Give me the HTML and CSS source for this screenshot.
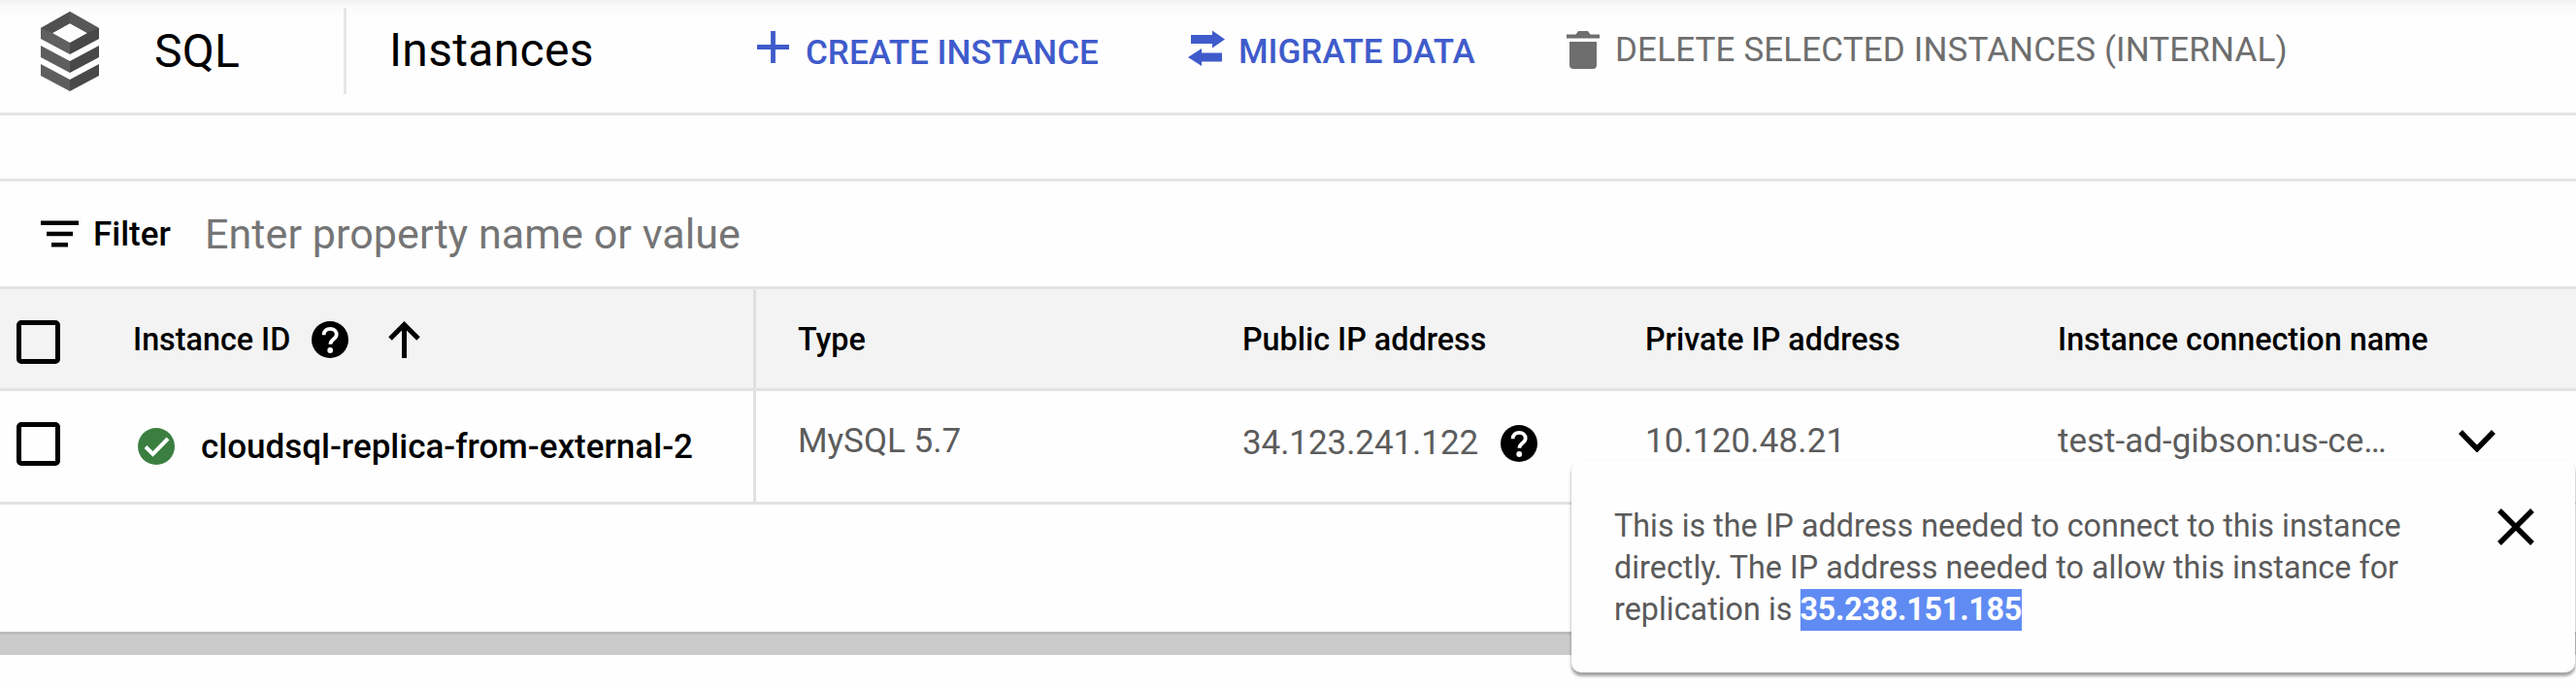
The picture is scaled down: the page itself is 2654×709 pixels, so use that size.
FILE: index.html
```
<!DOCTYPE html>
<html lang="en">
<head>
<meta charset="utf-8">
<title>SQL Instances</title>
<link rel="stylesheet" href="styles.css">
</head>
<body>
<svg class="defs" aria-hidden="true">
  <symbol id="help" viewBox="0 0 38 38">
    <circle cx="19" cy="19" r="19" fill="#000"/>
    <path d="M12.600 14.200c0-4 2.900-6.400 6.600-6.400s6.500 2.400 6.500 6c0 4.600-6.300 5-6.300 10" fill="none" stroke="#fff" stroke-width="3.800"/>
    <circle cx="19.200" cy="30" r="2.900" fill="#fff"/>
  </symbol>
</svg>

<header class="topbar">
  <div class="brand">
    <svg class="logo" viewBox="0 0 60 82">
      <path d="M0 17 30 0v12L12 22 30 32v12L0 28z" fill="#606060"/>
      <path d="M60 17 30 0v12l18 10-18 10v12l30-16z" fill="#484848"/>
      <path d="M0 17 30 0v12L12 22z" fill="#505050"/>
      <path d="M60 17 30 0v12l18 10z" fill="#585858"/>
      <path d="M0 35l30 16v12L0 47zM0 54l30 16v12L0 66z" fill="#5e5e5e"/>
      <path d="M60 35 30 51v12l30-16zM60 54 30 70v12l30-16z" fill="#484848"/>
    </svg>
    <span class="product">SQL</span>
  </div>
  <h1 class="title">Instances</h1>
  <nav class="actions">
    <a class="action create">
      <svg class="plus" viewBox="0 0 33 33"><path d="M16.500 0v33M0 16.500h33" stroke="currentColor" stroke-width="4.800"/></svg>
      <span>CREATE INSTANCE</span>
    </a>
    <a class="action migrate">
      <svg class="swap" viewBox="0 0 38 37"><path d="M3 5h22V.5L38 9.500 25 18.500V14H3zM35 23.500H14V19L0 28l14 9v-4.500h21z" fill="currentColor"/></svg>
      <span>MIGRATE DATA</span>
    </a>
    <a class="action delete">
      <svg class="trash" viewBox="0 0 34 39"><path d="M0 3.500h9.500L12 0h10l2.500 3.500H34v4H0zM3 11h28v24q0 4-4 4H7q-4 0-4-4z" fill="currentColor"/></svg>
      <span>DELETE SELECTED INSTANCES (INTERNAL)</span>
    </a>
  </nav>
</header>

<main class="content">
  <div class="filter">
    <svg class="filter-icon" viewBox="0 0 39 28"><path d="M0 2.800h39M6 14h27M11 25.200h17" stroke="#000" stroke-width="4.600"/></svg>
    <span class="filter-label">Filter</span>
    <span class="filter-hint">Enter property name or value</span>
  </div>

  <div class="row head">
    <div class="cell id">
      <span class="checkbox"></span>
      <span class="label">Instance ID</span>
      <svg class="help"><use href="#help"/></svg>
      <svg class="sort" viewBox="0 0 33 38"><path d="M16.500 38V4M2 18 16.500 3.500 31 18" fill="none" stroke="#000" stroke-width="5"/></svg>
    </div>
    <div class="cell">Type</div>
    <div class="cell">Public IP address</div>
    <div class="cell">Private IP address</div>
    <div class="cell">Instance connection name</div>
  </div>

  <div class="row item">
    <div class="cell id">
      <span class="checkbox"></span>
      <svg class="status" viewBox="0 0 38 38"><circle cx="19" cy="19" r="19" fill="#3b7f40"/><path d="M8 19.500l7.500 7.500L31 11" fill="none" stroke="#fff" stroke-width="4"/></svg>
      <span class="name">cloudsql-replica-from-external-2</span>
    </div>
    <div class="cell">MySQL 5.7</div>
    <div class="cell public"><span>34.123.241.122</span><svg class="help"><use href="#help"/></svg></div>
    <div class="cell private">10.120.48.21</div>
    <div class="cell connection"><span>test-ad-gibson:us-ce…</span>
      <svg class="chevron" viewBox="0 0 38 23"><path d="M2 2l17 17.500L36 2" fill="none" stroke="#000" stroke-width="5.600"/></svg>
    </div>
  </div>
  <div class="scrollbar"></div>

  <aside class="popover">
    <p class="message">This is the IP address needed to connect to this instance<br>directly. The IP address needed to allow this instance for<br>replication is <mark class="ip">35.238.151.185</mark></p>
    <svg class="close" viewBox="0 0 38 38"><path d="M2 2l34 34M36 2 2 36" stroke="#000" stroke-width="5.400"/></svg>
  </aside>
</main>
</body>
</html>
```
FILE: styles.css
```
* { box-sizing: border-box; }

body {
  margin: 0;
  width: 2654px;
  height: 709px;
  overflow: hidden;
  background: #fefefe;
  color: #000;
  font-family: Roboto, sans-serif;
  white-space: nowrap;
}

svg { display: block; flex: none; }
.defs { display: none; }

.topbar {
  display: flex;
  height: 119px;
  padding-bottom: 14px;
  border-bottom: 3px solid #e4e4e4;
  background: linear-gradient(#f1f1f1, #fafafa 6px, #fefefe 20px);
}

.brand {
  display: flex;
  align-items: center;
  gap: 57px;
  width: 357px;
  height: 89px;
  margin-top: 8px;
  padding-left: 42px;
  border-right: 3px solid #e6e6e6;
}

.logo { width: 60px; height: 82px; }

.product, .title {
  font-size: 48px;
  font-weight: 400;
  letter-spacing: 0.3px;
  line-height: 60px;
}

.title { width: 423px; margin: 22px 0 0; padding-left: 44px; }

.actions { display: flex; }

.action {
  display: flex;
  align-items: center;
  height: 102px;
  font-size: 35px;
  font-weight: 500;
  color: #3f5bcb;
}

.create { gap: 17px; width: 444px; padding-top: 6px; }
.migrate { gap: 14px; width: 390px; padding-top: 5px; }
.delete { gap: 16px; padding-top: 1px; color: #6e6e6e; font-weight: 400; letter-spacing: 0.14px; }

.plus { width: 33px; height: 33px; margin-bottom: 12px; }
.swap { width: 38px; height: 37px; margin-bottom: 8px; }
.trash { width: 34px; height: 39px; }

.content { position: relative; padding-top: 65px; }

.filter {
  display: flex;
  align-items: center;
  height: 114px;
  padding-left: 42px;
  border: solid #e4e4e4;
  border-width: 3px 0;
}

.filter-icon { width: 39px; height: 28px; }

.filter-label {
  width: 115px;
  margin-left: 15px;
  font-size: 35px;
  font-weight: 500;
}

.filter-hint { font-size: 43px; letter-spacing: 0.08px; color: #757575; }

.row {
  display: grid;
  grid-template-columns: 779px 458px 415px 425px 1fr;
  border-bottom: 3px solid #e2e2e2;
}

.cell { display: flex; align-items: center; padding-left: 43px; }

.id { padding-left: 17px; border-right: 3px solid #e0e0e0; }

.head {
  height: 105px;
  background: #f3f3f3;
  font-size: 32.300px;
  font-weight: 500;
}

.head .cell { padding-top: 2px; }

.item { height: 117px; font-size: 35px; color: #5c5c5c; }
.item .cell { padding-bottom: 11px; }
.item .id { padding-bottom: 0; }

.checkbox {
  width: 45px;
  height: 45px;
  border: 5px solid #000;
  border-radius: 5px;
}

.head .checkbox { margin-top: 4px; }
.item .checkbox { margin-bottom: 5px; }

.label { width: 184px; margin-left: 75px; }
.help { width: 38px; height: 38px; }
.sort { width: 33px; height: 38px; margin-left: 41px; }

.status { width: 38px; height: 38px; margin-left: 80px; }
.name { margin-left: 27px; padding-top: 1px; font-weight: 500; color: #000; }

.item .public { gap: 23px; padding-bottom: 7px; letter-spacing: -0.07px; }
.private { letter-spacing: 0.13px; }
.connection { letter-spacing: 0; }
.chevron { width: 38px; height: 23px; margin-left: 74px; }

.scrollbar {
  height: 24px;
  margin-top: 131px;
  border-top: 3px solid #bbb;
  background: #cbcbcb;
}

.popover {
  position: absolute;
  top: 356px;
  left: 1619px;
  display: flex;
  justify-content: space-between;
  width: 1034px;
  height: 218px;
  padding: 46px 42px 0 44px;
  border-radius: 10px;
  background: #fefefe;
  box-shadow: 0 4px 3px rgba(0, 0, 0, 0.3), 0 2px 4px rgba(0, 0, 0, 0.12);
}

.message {
  margin: 0;
  font-size: 32.340px;
  line-height: 43px;
  color: #5a5a5a;
}

.ip {
  display: inline-block;
  background: #5f8bf3;
  color: #fff;
  font-weight: 700;
  letter-spacing: -0.25px;
}

.close { width: 38px; height: 38px; margin-top: 3px; }
```
